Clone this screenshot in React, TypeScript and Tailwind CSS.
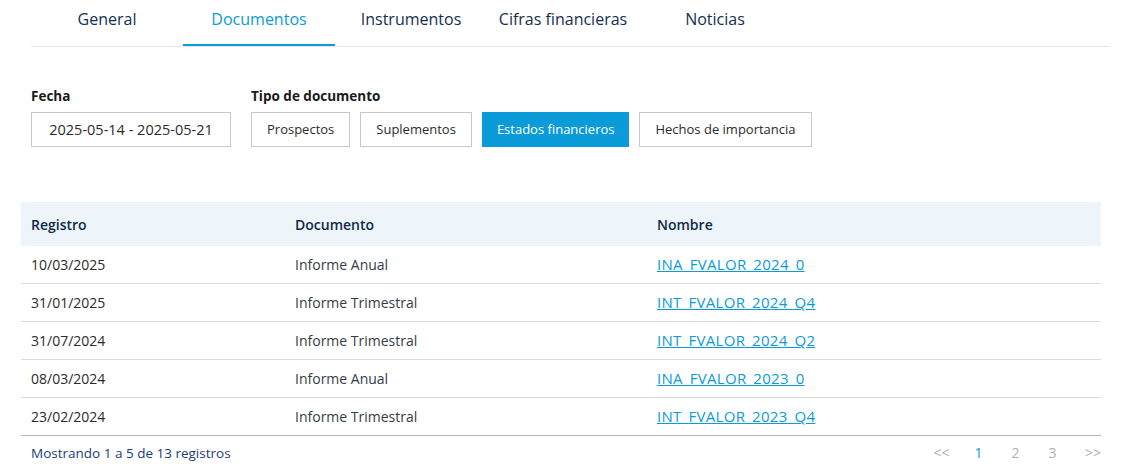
import React from "react";

const tabs = ["General", "Documentos", "Instrumentos", "Cifras financieras", "Noticias"];
const types = ["Prospectos", "Suplementos", "Estados financieros", "Hechos de importancia"];
const rows = [
  ["10/03/2025", "Informe Anual", "INA_FVALOR_2024_0"],
  ["31/01/2025", "Informe Trimestral", "INT_FVALOR_2024_Q4"],
  ["31/07/2024", "Informe Trimestral", "INT_FVALOR_2024_Q2"],
  ["08/03/2024", "Informe Anual", "INA_FVALOR_2023_0"],
  ["23/02/2024", "Informe Trimestral", "INT_FVALOR_2023_Q4"],
];

export default function App() {
  return (
    <div className="h-[464px] w-[1145px] overflow-hidden bg-white text-[#2b2b2b]" style={{ fontFamily: "'Open Sans', 'Liberation Sans', sans-serif" }}>
      <div className="ml-[31px] mr-[35px] flex border-b border-[#e6e6e6]">
        {tabs.map((t, i) => (
          <div
            key={t}
            className={
              "flex h-[46px] w-[152px] items-center justify-center border-b-2 pb-[6px] text-[16px] " +
              (i === 1 ? "border-[#0a9bd8] text-[#0a9bd8]" : "border-transparent text-[#14304f]")
            }
          >
            {t}
          </div>
        ))}
      </div>

      <div className="ml-[31px] mt-[40px] flex gap-[20px]">
        <div className="flex flex-col">
          <div className="mb-[7px] text-[13.5px] font-bold leading-[18px] text-[#1a1a1a]">Fecha</div>
          <div className="flex h-[35px] w-[200px] items-center justify-center border border-[#c8c8c8] text-[14.5px] text-[#2b2b2b]">
            2025-05-14 - 2025-05-21
          </div>
        </div>
        <div className="flex flex-col">
          <div className="mb-[7px] text-[13.5px] font-bold leading-[18px] text-[#1a1a1a]">Tipo de documento</div>
          <div className="flex gap-[10px]">
            {types.map((t, i) => (
              <div
                key={t}
                className={
                  "flex h-[35px] items-center justify-center px-[15px] text-[13px] " +
                  (i === 2 ? "bg-[#0a9bd8] text-white" : "border border-[#c8c8c8] text-[#2b2b2b]")
                }
              >
                {t}
              </div>
            ))}
          </div>
        </div>
      </div>

      <div className="ml-[21px] mt-[55px] w-[1080px]">
        <div className="flex h-[44px] items-center bg-[#edf5fb] text-[14px] font-semibold text-[#102a48]">
          <div className="w-[274px] pl-[10px]">Registro</div>
          <div className="w-[362px]">Documento</div>
          <div>Nombre</div>
        </div>
        {rows.map((r, i) => (
          <div
            key={r[0]}
            className={
              "flex h-[38px] items-center border-b text-[14px] text-[#2b2b2b] " +
              (i === rows.length - 1 ? "border-[#b5b5b5]" : "border-[#dcdcdc]")
            }
          >
            <div className="w-[274px] pl-[10px]">{r[0]}</div>
            <div className="w-[362px] text-[#333d47]">{r[1]}</div>
            <div className="text-[15px] tracking-[0.3px] text-[#0a9bd8] underline">{r[2]}</div>
          </div>
        ))}
        <div className="flex items-center justify-between pt-[5px]">
          <div className="pl-[10px] pt-[2px] text-[13.5px] text-[#1b3d78]">Mostrando 1 a 5 de 13 registros</div>
          <div className="flex text-[14px] text-[#b0b0b0]">
            <span className="w-[37px] text-center">&lt;&lt;</span>
            <span className="w-[37px] text-center text-[#0a9bd8]">1</span>
            <span className="w-[37px] text-center">2</span>
            <span className="w-[37px] text-center">3</span>
            <span className="w-[30px] text-right">&gt;&gt;</span>
          </div>
        </div>
      </div>
    </div>
  );
}
